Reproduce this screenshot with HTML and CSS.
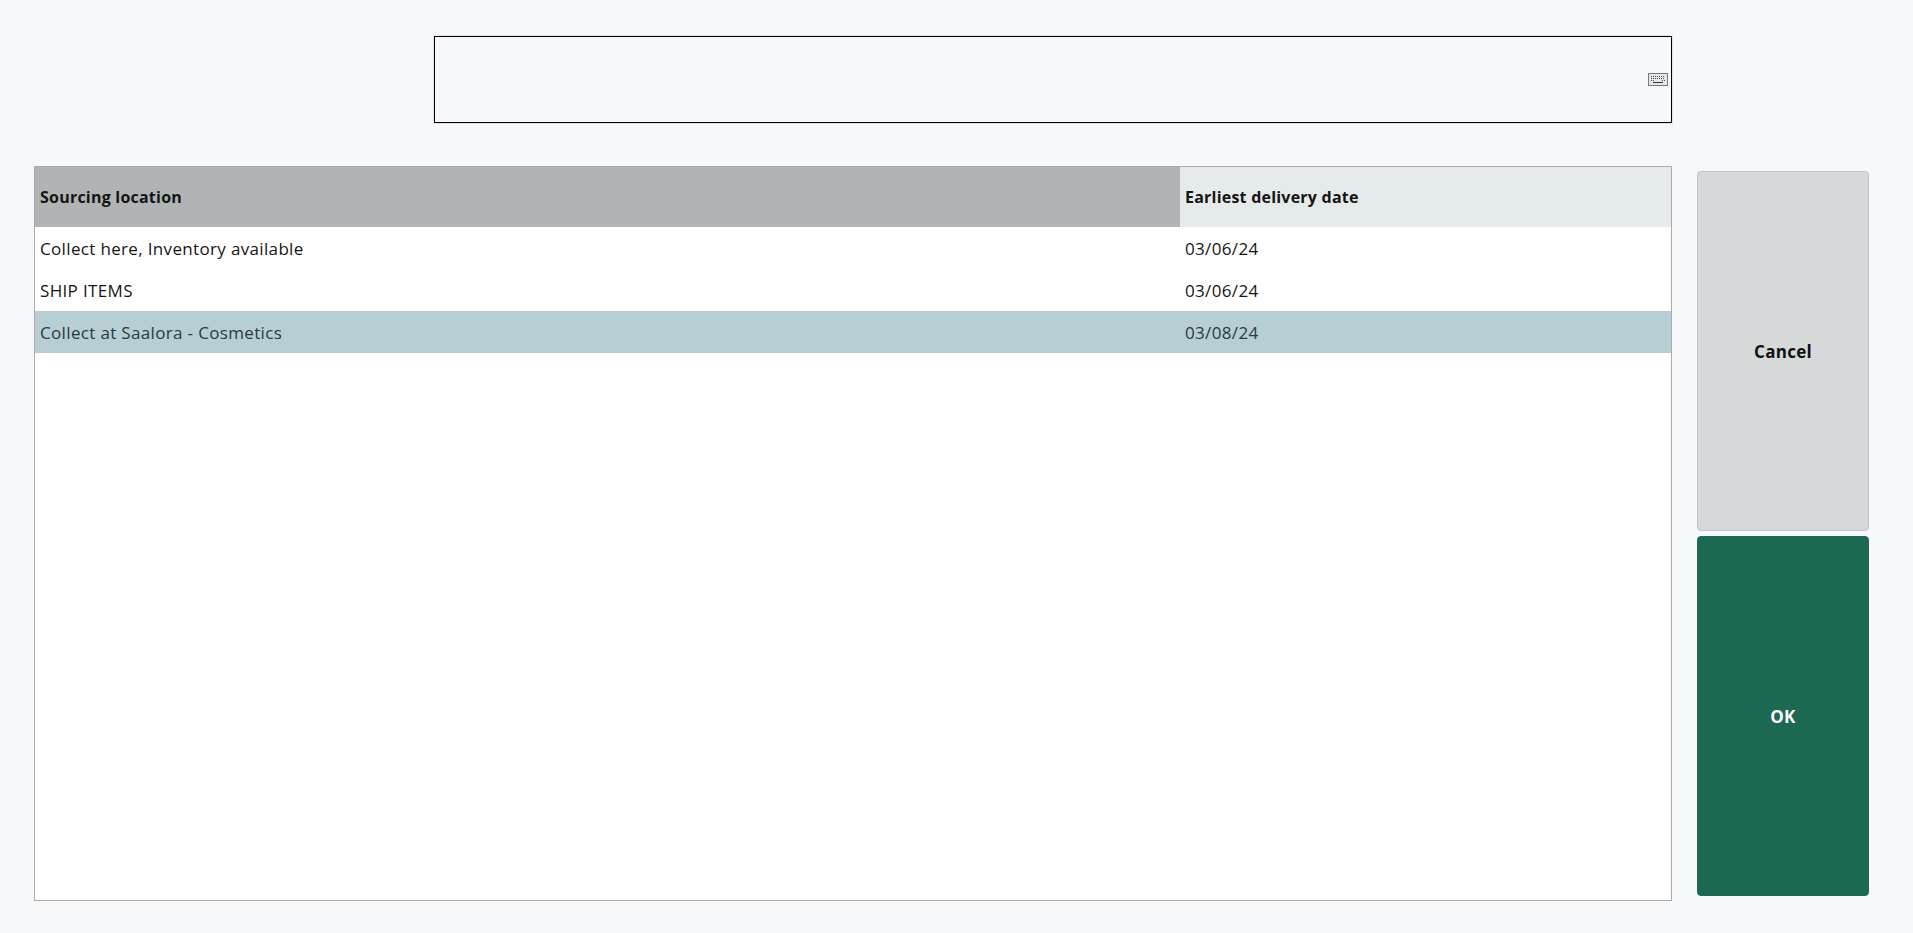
FILE: index.html
```html
<!DOCTYPE html>
<html lang="en">
<head>
<meta charset="utf-8">
<title>Sourcing location</title>
<link rel="stylesheet" href="styles.css">
</head>
<body>
<div class="page">
  <div class="search-row">
    <div class="search-box">
      <svg class="kbd" width="20" height="13" viewBox="0 0 20 13" aria-hidden="true">
        <rect x="0.5" y="0.5" width="19" height="12" fill="#e4e6e7" stroke="#74797c"/>
        <path d="M3 3.5h14M3 5.5h14" stroke="#4d5154" stroke-width="1" stroke-dasharray="1 1" fill="none"/>
        <path d="M3 7.5h4M14 7.5h3" stroke="#4d5154" stroke-width="1" stroke-dasharray="1 1" fill="none"/>
        <path d="M5 9.5h10" stroke="#2f3437" stroke-width="1" fill="none"/>
      </svg>
    </div>
  </div>
  <div class="main-row">
    <div class="table">
      <div class="row head">
        <div class="cell sorted">Sourcing location</div>
        <div class="cell">Earliest delivery date</div>
      </div>
      <div class="row">
        <div class="cell">Collect here, Inventory available</div>
        <div class="cell">03/06/24</div>
      </div>
      <div class="row">
        <div class="cell">SHIP ITEMS</div>
        <div class="cell">03/06/24</div>
      </div>
      <div class="row selected">
        <div class="cell">Collect at Saalora - Cosmetics</div>
        <div class="cell">03/08/24</div>
      </div>
    </div>
    <div class="actions">
      <button class="btn cancel" type="button">Cancel</button>
      <button class="btn ok" type="button">OK</button>
    </div>
  </div>
</div>
</body>
</html>
```
FILE: styles.css
```css
html, body {
  margin: 0;
  height: 100%;
}
body {
  background: #f7f8fa;
  font-family: "Open Sans", "Noto Sans", sans-serif;
  color: #151515;
  overflow: hidden;
}
.page {
  display: flex;
  flex-direction: column;
  height: 933px;
  box-sizing: border-box;
  padding: 36px 0 0 34px;
}
.search-row {
  padding-left: 400px;
}
.search-box {
  width: 1238px;
  height: 87px;
  box-sizing: border-box;
  border: 1px solid #000;
  outline: 1px solid #e2e4e6;
  display: flex;
  align-items: center;
  justify-content: flex-end;
  padding-right: 3px;
}
.main-row {
  display: flex;
  align-items: flex-start;
  margin-top: 43px;
}
.table {
  width: 1638px;
  height: 735px;
  box-sizing: border-box;
  border: 1px solid #a9abad;
  background: #fff;
}
.row {
  display: grid;
  grid-template-columns: 1145px 1fr;
  height: 42px;
  font-size: 17px;
  letter-spacing: 0.34px;
}
.cell {
  display: flex;
  align-items: center;
  padding-left: 5px;
  box-sizing: border-box;
  min-width: 0;
  white-space: nowrap;
}
.head {
  height: 60px;
  background: #e5eaeb;
  font-weight: 700;
  font-size: 16px;
  letter-spacing: 0.22px;
}
.sorted {
  background: #b1b4b4;
}
.selected {
  background: #b7ced4;
  color: #2a3a42;
}
.actions {
  display: flex;
  flex-direction: column;
  gap: 5px;
  margin-left: 25px;
  margin-top: 5px;
}
.btn {
  width: 172px;
  height: 360px;
  border-radius: 4px;
  box-sizing: border-box;
  font: 700 17px "Open Sans", "Noto Sans", sans-serif;
  letter-spacing: 0.26px;
  padding: 1px 0 0;
}
.cancel {
  background: #d5d9da;
  border: 1px solid #bfc3c4;
  color: #111;
}
.ok {
  background: #1c6852;
  border: 1px solid #1c6852;
  color: #fff;
}
.kbd {
  display: block;
}
```
